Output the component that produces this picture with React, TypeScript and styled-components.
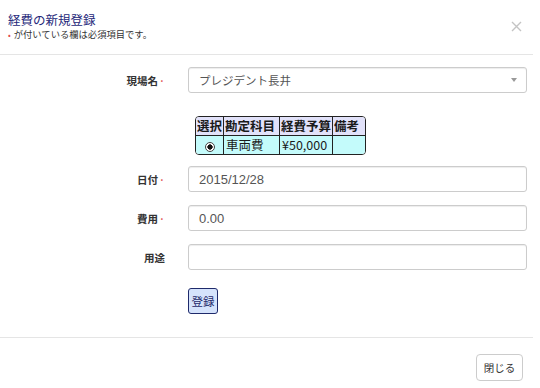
import React from 'react'
import styled, { createGlobalStyle } from 'styled-components'

const jp = `'Noto Sans CJK JP', 'Noto Sans', sans-serif`
const latin = `'Liberation Sans', 'Noto Sans CJK JP', sans-serif`

const GlobalStyle = createGlobalStyle`
  html, body {
    margin: 0;
    padding: 0;
    background: #ffffff;
  }
  body {
    font-family: ${jp};
    color: #333333;
  }
`

interface FieldProps {
  label: string
  required?: boolean
  children: React.ReactNode
}

const Field: React.FC<FieldProps> = ({ label, required, children }) => (
  <StyledRow>
    <StyledLabel>
      {label}
      {required ? <StyledReq>•</StyledReq> : <StyledReqSpace />}
    </StyledLabel>
    {children}
  </StyledRow>
)

const CloseIcon = () => (
  <svg width="11" height="11" viewBox="0 0 11 11">
    <path d="M1 1 L10 10 M10 1 L1 10" stroke="#c4c4c4" strokeWidth="1.4" fill="none" />
  </svg>
)

const App: React.FC = () => {
  return (
    <StyledModal>
      <GlobalStyle />
      <StyledHeader>
        <div>
          <StyledTitle>経費の新規登録</StyledTitle>
          <StyledNote>
            <StyledNoteDot>•</StyledNoteDot>が付いている欄は必須項目です。
          </StyledNote>
        </div>
        <StyledClose>
          <CloseIcon />
        </StyledClose>
      </StyledHeader>

      <StyledBody>
        <Field label="現場名" required>
          <StyledSelect>
            <span>プレジデント長井</span>
            <StyledCaret />
          </StyledSelect>
        </Field>

        <StyledTableWrap>
          <StyledTable>
            <thead>
              <tr>
                <StyledTh w={28}>選択</StyledTh>
                <StyledTh w={56}>勘定科目</StyledTh>
                <StyledTh w={53}>経費予算</StyledTh>
                <StyledTh w={32} last>備考</StyledTh>
              </tr>
            </thead>
            <tbody>
              <tr>
                <StyledTd center>
                  <StyledRadio />
                </StyledTd>
                <StyledTd>車両費</StyledTd>
                <StyledTd>¥50,000</StyledTd>
                <StyledTd last></StyledTd>
              </tr>
            </tbody>
          </StyledTable>
        </StyledTableWrap>

        <StyledFields>
          <Field label="日付" required>
            <StyledInput>2015/12/28</StyledInput>
          </Field>
          <Field label="費用" required>
            <StyledInput>0.00</StyledInput>
          </Field>
          <Field label="用途">
            <StyledInput />
          </Field>
        </StyledFields>

        <StyledActions>
          <StyledSubmit>登録</StyledSubmit>
        </StyledActions>
      </StyledBody>

      <StyledFooter>
        <StyledCloseButton>閉じる</StyledCloseButton>
      </StyledFooter>
    </StyledModal>
  )
}

const StyledModal = styled.div`
  width: 533px;
  background: #ffffff;
`

const StyledHeader = styled.div`
  display: flex;
  justify-content: space-between;
  align-items: flex-start;
  height: 55px;
  box-sizing: border-box;
  padding: 11px 11px 0 8px;
  border-bottom: 1px solid #e5e5e5;
`

const StyledTitle = styled.div`
  font-size: 12.5px;
  line-height: 17px;
  color: #25287a;
`

const StyledNote = styled.div`
  font-size: 9.3px;
  line-height: 12px;
  color: #333333;
`

const StyledNoteDot = styled.span`
  color: #e04848;
  font-size: 8px;
  margin-right: 3px;
`

const StyledClose = styled.div`
  margin-top: 2px;
  width: 11px;
  height: 11px;
`

const StyledBody = styled.div`
  padding: 12px 0 23px 0;
  border-bottom: 1px solid #e5e5e5;
`

const StyledRow = styled.div`
  display: grid;
  grid-template-columns: 188px 339px;
  align-items: center;
  height: 26px;
`

const StyledFields = styled.div`
  display: flex;
  flex-direction: column;
  gap: 13px;
`

const StyledLabel = styled.label`
  font-size: 10.5px;
  font-weight: bold;
  color: #333333;
  text-align: right;
  padding-right: 23px;
  display: flex;
  justify-content: flex-end;
  align-items: center;
`

const StyledReq = styled.span`
  color: #e04848;
  font-size: 6px;
  width: 6px;
  text-align: center;
  margin-left: 1px;
`

const StyledReqSpace = styled.span`
  width: 0;
`

const StyledInput = styled.div`
  height: 26px;
  box-sizing: border-box;
  border: 1px solid #cccccc;
  border-radius: 3px;
  box-shadow: inset 0 1px 1px rgba(0, 0, 0, 0.075);
  padding: 0 10px;
  display: flex;
  align-items: center;
  font-family: ${latin};
  font-size: 13px;
  color: #555555;
`

const StyledSelect = styled(StyledInput)`
  justify-content: space-between;
  font-family: ${jp};
  font-size: 11.5px;
  padding-right: 9px;
`

const StyledCaret = styled.span`
  width: 0;
  height: 0;
  border-left: 3px solid transparent;
  border-right: 3px solid transparent;
  border-top: 4px solid #999999;
`

const StyledTableWrap = styled.div`
  padding-left: 195px;
  margin: 23px 0 11px 0;
`

const StyledTable = styled.table`
  border-collapse: separate;
  border-spacing: 0;
  border: 1px solid #222222;
  border-radius: 4px;
  overflow: hidden;
  font-family: ${jp};
  font-size: 12.5px;
  color: #1a1a1a;
  table-layout: fixed;
`

const StyledTh = styled.th<{ w: number; last?: boolean }>`
  width: ${(props) => props.w}px;
  box-sizing: border-box;
  height: 18px;
  padding: 0 1px;
  background: #e2e2fa;
  font-weight: bold;
  line-height: 18px;
  text-align: left;
  white-space: nowrap;
  border-right: ${(props) => (props.last ? 'none' : '1px solid #222222')};
  border-bottom: 1px solid #222222;
`

const StyledTd = styled.td<{ center?: boolean; last?: boolean }>`
  height: 18px;
  padding: 0 2px;
  background: #c4fbfb;
  line-height: 18px;
  text-align: ${(props) => (props.center ? 'center' : 'left')};
  white-space: nowrap;
  border-right: ${(props) => (props.last ? 'none' : '1px solid #222222')};
`

const StyledRadio = styled.span`
  display: inline-block;
  vertical-align: middle;
  width: 10px;
  height: 10px;
  box-sizing: border-box;
  border-radius: 50%;
  border: 1px solid #444444;
  background: radial-gradient(circle, #111111 0 2.4px, #ffffff 2.9px);
`

const StyledActions = styled.div`
  padding-left: 188px;
  margin-top: 17px;
`

const StyledSubmit = styled.button`
  width: 30px;
  height: 26px;
  padding: 0;
  border: 1px solid #1f2a6b;
  border-radius: 3px;
  background: #d5e3fc;
  font-family: ${jp};
  font-size: 11.5px;
  color: #1f2a6b;
`

const StyledFooter = styled.div`
  display: flex;
  justify-content: flex-end;
  padding: 16px 10px 7px 0;
`

const StyledCloseButton = styled.button`
  width: 47px;
  height: 27px;
  padding: 0;
  border: 1px solid #cccccc;
  border-radius: 4px;
  background: #ffffff;
  font-family: ${jp};
  font-size: 10.5px;
  color: #333333;
`

export default App
